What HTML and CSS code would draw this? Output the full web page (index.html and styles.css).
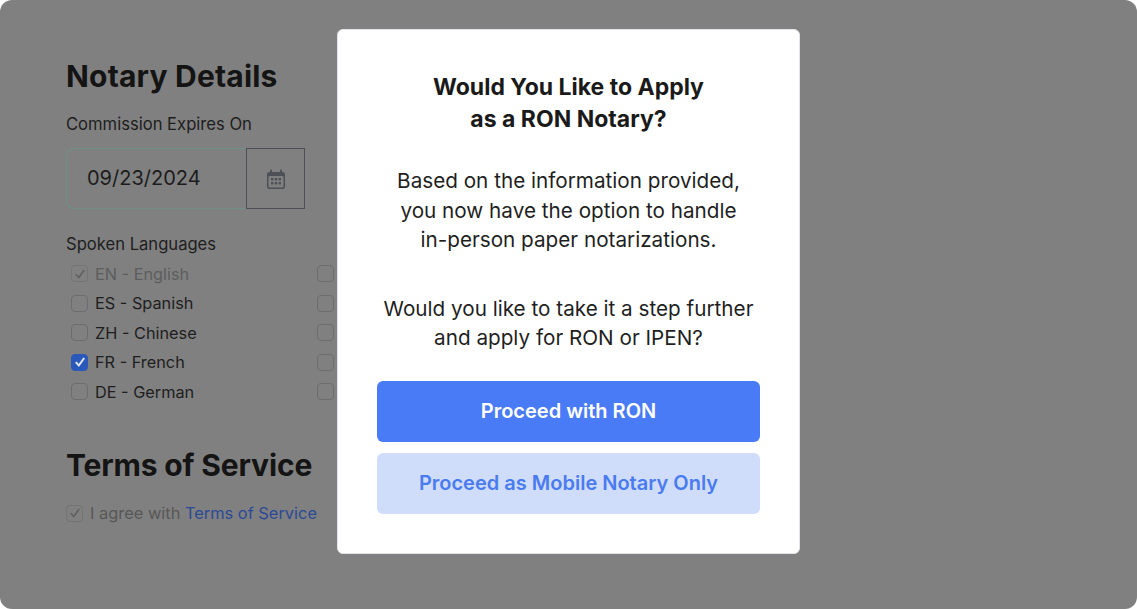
FILE: index.html
```html
<!DOCTYPE html>
<html lang="en">
<head>
<meta charset="utf-8">
<title>Notary Details</title>
<link rel="stylesheet" href="styles.css">
</head>
<body>
<main class="stage">
  <section class="form">
    <h2 class="heading heading-notary">Notary Details</h2>
    <div class="label label-commission">Commission Expires On</div>
    <div class="date-field">
      <div class="date-value">09/23/2024</div>
      <div class="date-button">
        <svg class="cal" width="18" height="20" viewBox="0 0 18 20"><path d="M4 0.5a1 1 0 0 1 1 1V3h8V1.500a1 1 0 0 1 2 0V3h.5A2.500 2.500 0 0 1 18 5.500v12a2.500 2.500 0 0 1-2.500 2.500h-13A2.500 2.500 0 0 1 0 17.500v-12A2.500 2.500 0 0 1 2.500 3H3V1.500a1 1 0 0 1 1-1z" fill="#4d5157"/><rect x="1.500" y="7" width="15" height="11.500" rx="1" fill="#7f7f7f"/><g fill="#4d5157"><rect x="4" y="9" width="2.400" height="2.400"/><rect x="7.800" y="9" width="2.400" height="2.400"/><rect x="11.600" y="9" width="2.400" height="2.400"/><rect x="4" y="13" width="2.400" height="2.400"/><rect x="7.800" y="13" width="2.400" height="2.400"/><rect x="11.600" y="13" width="2.400" height="2.400"/></g></svg>
      </div>
    </div>
    <div class="label label-lang">Spoken Languages</div>
    <div class="lang-grid">
      <div class="lang-col">
        <div class="check-row muted"><span class="box box-off"><svg width="14" height="14" viewBox="0 0 14 14"><path d="M2.800 7.200l3 3.300 5.400-7.500" fill="none" stroke="#5f5f5f" stroke-width="1.600"/></svg></span>EN - English</div>
        <div class="check-row"><span class="box"></span>ES - Spanish</div>
        <div class="check-row"><span class="box"></span>ZH - Chinese</div>
        <div class="check-row"><span class="box box-on"><svg width="14" height="14" viewBox="0 0 14 14"><path d="M2.800 7.200l3 3.300 5.400-7.500" fill="none" stroke="#e4e8f0" stroke-width="2"/></svg></span>FR - French</div>
        <div class="check-row"><span class="box"></span>DE - German</div>
      </div>
      <div class="lang-col">
        <div class="check-row"><span class="box"></span></div>
        <div class="check-row"><span class="box"></span></div>
        <div class="check-row"><span class="box"></span></div>
        <div class="check-row"><span class="box"></span></div>
        <div class="check-row"><span class="box"></span></div>
      </div>
    </div>
    <h2 class="heading heading-terms">Terms of Service</h2>
    <div class="check-row terms-row"><span class="box box-off"><svg width="14" height="14" viewBox="0 0 14 14"><path d="M2.800 7.200l3 3.300 5.400-7.500" fill="none" stroke="#5f5f5f" stroke-width="1.600"/></svg></span>I agree with&nbsp;<a class="link" href="#">Terms of Service</a></div>
  </section>
  <div class="modal">
    <h1 class="modal-title">Would You Like to Apply<br>as a RON Notary?</h1>
    <p class="modal-text">Based on the information provided,<br>you now have the option to handle<br>in-person paper notarizations.</p>
    <p class="modal-text modal-text-second">Would you like to take it a step further<br>and apply for RON or IPEN?</p>
    <button class="btn btn-primary">Proceed with RON</button>
    <button class="btn btn-secondary">Proceed as Mobile Notary Only</button>
  </div>
</main>
</body>
</html>
```
FILE: styles.css
```css
* { box-sizing: border-box; }
html, body { margin: 0; padding: 0; background: #ffffff; }
body { font-family: "Inter", "Open Sans", sans-serif; overflow: hidden; }
.stage {
  position: relative;
  width: 1137px;
  height: 609px;
  background: #808080;
  border-radius: 12px;
  overflow: hidden;
}
.form { padding: 58px 0 0 66px; color: #1c1c1c; }
.heading { margin: 0; font-size: 30px; line-height: 36px; font-weight: 700; color: #141414; }
.heading-notary { letter-spacing: 0.2px; }
.heading-terms { margin-top: 40px; letter-spacing: -0.15px; }
.label { font-size: 16.600px; line-height: 22px; color: #1e1e1e; }
.label-commission { margin-top: 19px; }
.label-lang { margin-top: 24px; }
.date-field { display: flex; margin-top: 13px; width: 239px; height: 61px; }
.date-value {
  width: 181px;
  border: 1px solid #6f9088;
  border-right: 0;
  border-radius: 8px 0 0 8px;
  padding-left: 20px;
  font-size: 20px;
  line-height: 58px;
  color: #1c1c1c;
}
.date-button {
  width: 59px;
  flex: none;
  border: 1px solid #4c5056;
  display: flex;
  align-items: center;
  justify-content: center;
}
.lang-grid { display: flex; margin-top: 4px; }
.lang-col { width: 246px; }
.check-row { display: flex; align-items: center; height: 29.500px; font-size: 16.300px; color: #1e1e1e; margin-left: 5px; }
.muted { color: #5d5d5d; }
.box {
  width: 17px;
  height: 17px;
  flex: none;
  margin-right: 7px;
  border: 1px solid #6d6d6d;
  border-radius: 4px;
  display: flex;
  align-items: center;
  justify-content: center;
}
.box-on { background: #2a58bb; border-color: #2a58bb; }
.box-off { border-color: #747474; }
.terms-row { margin: 16px 0 0 0; color: #575757; font-size: 16.400px; }
.link { color: #2b4a96; text-decoration: none; }
.modal {
  position: absolute;
  left: 337px;
  top: 29px;
  width: 463px;
  height: 525px;
  background: #ffffff;
  border: 1px solid #e4e4ea;
  border-radius: 6px;
  padding: 41px 39px 0;
  text-align: center;
}
.modal-title { margin: 0; font-size: 23px; line-height: 32px; font-weight: 700; color: #1a1a1a; }
.modal-text { margin: 31px 0 0; font-size: 20.700px; line-height: 29.500px; color: #1f1f1f; }
.modal-text-second { margin-top: 39px; }
.btn {
  display: block;
  width: 383px;
  height: 61px;
  border: 0;
  border-radius: 6px;
  font-family: inherit;
  font-size: 20px;
  font-weight: 600;
}
.btn-primary { margin-top: 28px; background: #4a7bf7; color: #ffffff; }
.btn-secondary { margin-top: 11px; background: #d0ddfa; color: #4a7bf0; }
```
